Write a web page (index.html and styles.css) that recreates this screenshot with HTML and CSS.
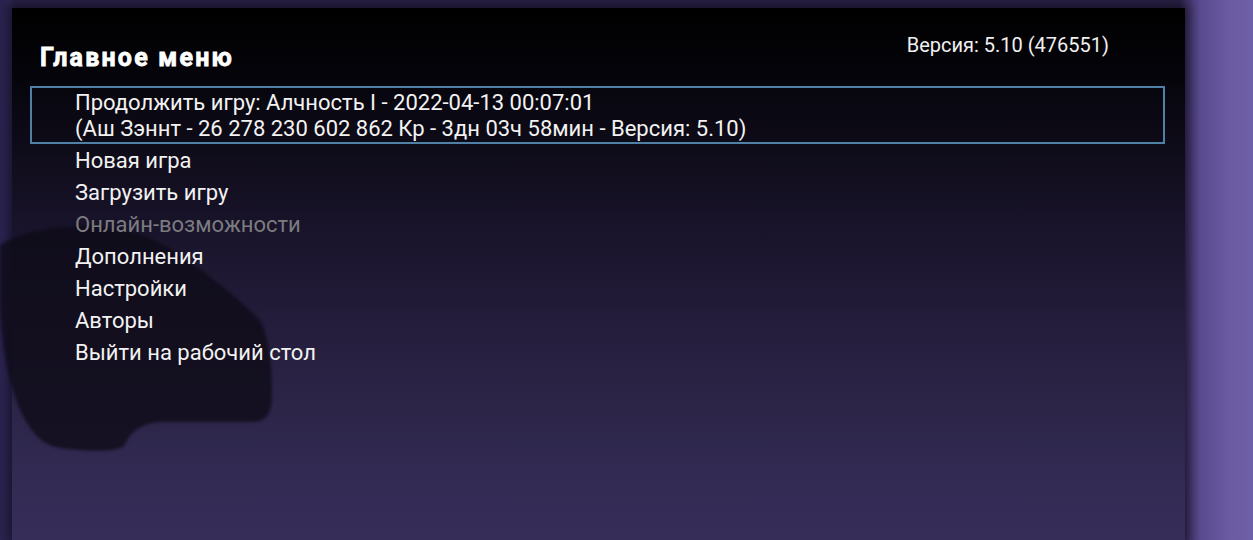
FILE: index.html
```html
<!DOCTYPE html>
<html lang="ru">
<head>
<meta charset="utf-8">
<title>Главное меню</title>
<link rel="stylesheet" href="styles.css">
</head>
<body>
<div class="screen">
  <div class="panel">
    <svg class="blob" width="290" height="470" viewBox="0 0 290 470" aria-hidden="true">
      <path d="M0,245 C20,232 50,226 90,226 C130,226 160,240 190,262 C215,280 240,300 258,318 C268,330 272,360 272,395 C272,412 268,420 255,422 L160,422 C140,424 130,432 125,445 C120,452 90,452 60,448 C40,445 30,430 20,410 C8,380 0,340 0,300 Z"/>
    </svg>
    <header class="head">
      <h1 class="title">Главное меню</h1>
      <div class="version">Версия: 5.10 (476551)</div>
    </header>
    <ul class="menu">
      <li class="item selected">
        <span>Продолжить игру: Алчность I - 2022-04-13 00:07:01</span>
        <span>(Аш Зэннт - 26 278 230 602 862 Кр - 3дн 03ч 58мин - Версия: 5.10)</span>
      </li>
      <li class="item">Новая игра</li>
      <li class="item">Загрузить игру</li>
      <li class="item disabled">Онлайн-возможности</li>
      <li class="item">Дополнения</li>
      <li class="item">Настройки</li>
      <li class="item">Авторы</li>
      <li class="item">Выйти на рабочий стол</li>
    </ul>
  </div>
</div>
</body>
</html>
```

FILE: styles.css
```css
html, body {
  margin: 0;
  padding: 0;
  height: 100%;
}
body {
  font-family: Roboto, "Noto Sans", "Liberation Sans", sans-serif;
  color: #f2f2f2;
  overflow: hidden;
  background: linear-gradient(180deg, #2a2148 0%, #3d3266 35%, #5a4c93 70%, #6a5ca2 100%);
}
.screen {
  height: 100%;
  display: flex;
  padding: 8px 0 0 12px;
  box-sizing: border-box;
  background:
    linear-gradient(90deg, #2a2350 0px, #2d2553 12px, transparent 13px, transparent 1180px, #3a2e60 1185px, #594a8e 1200px, #6a5ba3 1230px, #6e60a8 1253px);
}
.panel {
  position: relative;
  width: 1173px;
  flex: none;
  background: linear-gradient(180deg, #000000 0%, #05040a 12%, #0e0b18 25%, #19142b 42%, #231c3a 58%, #2c2548 75%, #332b54 90%, #362e59 100%);
  box-shadow: 0 0 10px 4px rgba(0,0,0,0.45);
}
.blob {
  position: absolute;
  left: -12px;
  top: -8px;
  fill: #0e0b17;
  opacity: 0.78;
  filter: blur(1.5px);
}
.head {
  position: relative;
  display: flex;
  justify-content: space-between;
  align-items: flex-start;
  padding: 28px 76px 0 28px;
  height: 50px;
}
.title {
  margin: 0;
  padding-top: 8px;
  font-size: 25px;
  font-weight: 700;
  line-height: 28px;
  color: #ffffff;
  letter-spacing: 2.2px;
  -webkit-text-stroke: 0.8px #ffffff;
  text-shadow: 0 0 2px rgba(0,0,0,0.9);
}
.version {
  font-size: 20px;
  line-height: 20px;
  color: #f0f0f0;
  margin-top: -1px;
}
.menu {
  position: relative;
  list-style: none;
  margin: 0 20px 0 18px;
  padding: 0;
}
.item {
  font-size: 22px;
  line-height: 32px;
  padding-left: 43px;
  border: 2px solid transparent;
  border-top: 0;
  border-bottom: 0;
}
.item.selected {
  display: flex;
  flex-direction: column;
  line-height: 26px;
  padding-top: 2px;
  margin-bottom: 1px;
  border: 2px solid #4f80a6;
}
.item.disabled {
  color: #7c7c80;
}
```
